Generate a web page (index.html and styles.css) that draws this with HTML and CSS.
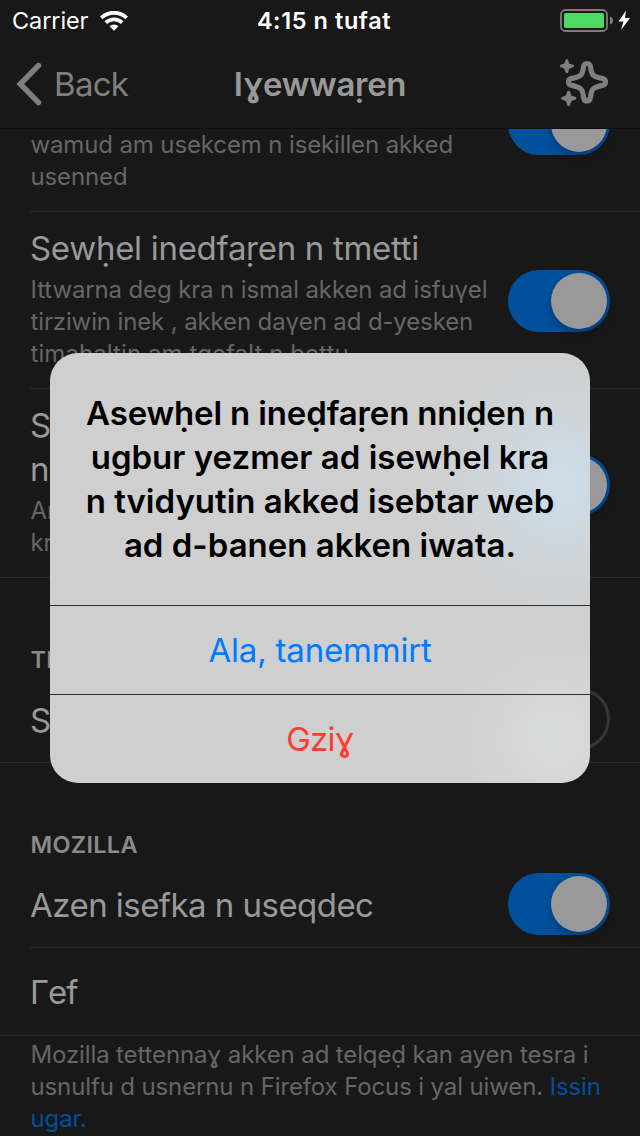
FILE: index.html
```html
<!DOCTYPE html>
<html lang="kab">
<head>
<meta charset="utf-8">
<title>Iɣewwaṛen</title>
<link rel="stylesheet" href="styles.css">
</head>
<body>
<div class="screen">
  <header class="top">
    <div class="status">
      <div class="carrier"><span class="carrier-name">Carrier</span>
        <svg class="wifi" width="28" height="20" viewBox="0 0 28 20"><g fill="none" stroke="#fff" stroke-width="3.8"><path d="M1.3 6.9A18.2 18.2 0 0 1 26.7 6.9"/><path d="M5.800 11.600A11.800 11.800 0 0 1 22.200 11.600"/></g><path fill="#fff" d="M9.6 15.200a6.400 6.400 0 0 1 8.800 0L14 19.800z"/></svg>
      </div>
      <div class="clock">4:15 n tufat</div>
      <div class="power">
        <svg width="72" height="24" viewBox="0 0 72 24"><rect x="1" y="1" width="46" height="21" rx="4.5" fill="none" stroke="#7c7c7c" stroke-width="1.8"/><rect x="4" y="4" width="40" height="15" rx="1.8" fill="#4cd964"/><path d="M50 7.500c4 1 4 7 0 8z" fill="#7c7c7c"/><path d="M66 1.500L58.500 12.500h5L61 21l9-12h-5z" fill="#fff"/></svg>
      </div>
    </div>
    <nav class="nav">
      <div class="back"><svg width="26" height="44" viewBox="0 0 26 44"><path d="M22.500 3.500L4.200 22 22.500 40.500" fill="none" stroke="#7f7f7f" stroke-width="5.4" stroke-linecap="round" stroke-linejoin="miter"/></svg><span class="back-label">Back</span></div>
      <h1 class="title">Iɣewwaṛen</h1>
      <div class="news"><svg width="50" height="50" viewBox="0 0 50 50"><path d="M27 5.500C30.500 5.500 30.500 8.500 31 12C32 17 33 18 38 19.500C42.500 20.500 45.500 20.500 45.500 24C45.500 27.500 42.500 27 38 28.500C33 30 32 31 31 36C30.500 39.500 30.500 43 27 43C23.500 43 23.500 39.500 23 36C22 31 21 30 16 28.500C11.500 27 8.500 27.500 8.500 24C8.500 20.500 11.500 20.500 16 19.500C21 18 22 17 23 12C23.500 8.500 23.500 5.500 27 5.500z" fill="none" stroke="#7f7f7f" stroke-width="5.2"/><g fill="#7f7f7f" stroke="#7f7f7f" stroke-width="1.600" stroke-linejoin="round"><path d="M6.300 2h1l1.400 4.200L13 7.600v1L8.700 10 7.300 14.200h-1L4.900 10 .9 8.600v-1L4.900 6.200z"/><path d="M8.100 33.500h1l1.700 4.700 4.700 1.600v1l-4.700 1.600-1.700 4.700h-1l-1.700-4.700L2 40.800v-1l4.400-1.600z"/></g></svg></div>
    </nav>
  </header>

  <main class="list">
    <section class="row row-first">
      <p class="sub"><span>wamud am usekcem n isekillen akked</span><span>usenned</span></p>
      <div class="switch on"><i class="knob"></i></div>
    </section>
    <section class="row row-social">
      <div class="copy"><h2 class="label">Sewḥel inedfaṛen n tmetti</h2>
      <p class="sub"><span>Ittwarna deg kra n ismal akken ad isfuүel</span><span>tirziwin inek , akken daүen ad d-yesken</span><span class="loose">timahaltin am tgefalt n bettu</span></p></div>
      <div class="switch on"><i class="knob"></i></div>
    </section>
    <section class="row row-other">
      <div class="copy"><h2 class="label"><span>Sewḥel ineḍfaṛen</span><span>nniḍen n ugbur</span></h2>
      <p class="sub"><span>Ar ad isewḥel</span><span>kra n tvidyutin</span></p></div>
      <div class="switch on"><i class="knob"></i></div>
    </section>
    <h3 class="group">TE</h3>
    <section class="row row-speed">
      <h2 class="label">Sewḥel</h2>
      <div class="switch"></div>
    </section>
    <h3 class="group">MOZILLA</h3>
    <section class="row row-usage">
      <h2 class="label tight">Azen isefka n useqdec</h2>
      <div class="switch on"><i class="knob"></i></div>
    </section>
    <section class="row row-about"><h2 class="label tighter">Γef</h2></section>
    <p class="sub note"><span>Mozilla tettennaɣ akken ad telqeḍ kan ayen tesra i</span><span>usnulfu d usnernu n Firefox Focus i yal uiwen. <a class="link">Issin</a></span><span><a class="link">ugar.</a></span></p>
  </main>

  <div class="alert">
    <p class="message"><span class="snug">Asewḥel n ineḍfaṛen nniḍen n</span><span>ugbur yezmer ad isewḥel kra</span><span>n tvidyutin akked isebtar web</span><span>ad d-banen akken iwata.</span></p>
    <div class="action"><span>Ala, tanemmirt</span></div>
    <div class="action danger"><span>Gziɣ</span></div>
  </div>
</div>
</body>
</html>
```
FILE: styles.css
```css
* { box-sizing: border-box; margin: 0; padding: 0; }
body { background: #181818; font-family: Inter, "Noto Sans", sans-serif; }
.screen { position: relative; width: 640px; height: 1136px; overflow: hidden; background: #181818; display: flex; flex-direction: column; }
.top { height: 129px; border-bottom: 1px solid #0d0d0d; flex: none; }
.status { height: 40px; display: grid; grid-template-columns: 1fr auto 1fr; align-items: center; color: #fff; line-height: 42px; }
.carrier { display: flex; align-items: center; padding-left: 12px; gap: 12px; }
.carrier-name { font-size: 23.5px; letter-spacing: -.1px; }
.clock { font-size: 23.5px; font-weight: 600; padding-left: 8px; letter-spacing: .58px; }
.power { display: flex; justify-content: flex-end; padding-right: 8px; }
.nav { height: 88px; display: grid; grid-template-columns: 1fr auto 1fr; align-items: center; }
.back { display: flex; align-items: center; padding-left: 16px; gap: 12px; color: #7f7f7f; }
.back-label { font-size: 33px; letter-spacing: -.7px; }
.title { font-size: 33px; font-weight: 600; color: #999; letter-spacing: -.3px; }
.news { display: flex; justify-content: flex-end; padding: 0 30px 2px 0; }
.list { flex: 1; overflow: hidden; }
.row { margin-left: 30px; padding-right: 30px; border-bottom: 1px solid #2b2b2b; display: flex; justify-content: space-between; }
.row-first { height: 83px; }
.row-first .switch { margin-top: -36px; }
.row-social { height: 177px; padding-top: 14px; }
.row-social .switch { margin-top: 44px; }
.row-other, .row-speed, .row-about { margin-left: 0; padding-left: 30px; }
.row-other { height: 189px; padding-top: 14px; }
.row-other .switch { margin-top: 51px; }
.row-speed { height: 87px; align-items: center; }
.row-usage { height: 87px; align-items: center; }
.row-about { height: 88px; align-items: center; }
.label { font-size: 33px; line-height: 44px; font-weight: 400; color: #999; white-space: nowrap; letter-spacing: -.3px; }
.row-speed .label, .row-usage .label { padding-top: 2px; }
.label.tight { letter-spacing: -.54px; }
.label.tighter { letter-spacing: -1px; }
.label span, .sub > span, .message span { display: block; white-space: nowrap; }
.sub { font-size: 24px; line-height: 32px; color: #666; letter-spacing: -.13px; padding-left: .5px; }
.copy .sub { margin-top: 4px; }
.sub .loose { letter-spacing: .08px; }
.link { color: #004f9e; }
.group { height: 98px; padding: 64px 0 0 30.5px; line-height: 36px; font-size: 23.5px; font-weight: 600; color: #8a8a8a; letter-spacing: .3px; }
.note { padding: 3px 0 0 30.5px; }
.switch { flex: none; width: 102px; height: 62px; border-radius: 31px; border: 3px solid #34363b; }
.switch.on { background: #00509d; border: 0; padding: 3px; display: flex; justify-content: flex-end; }
.knob { width: 56px; height: 56px; border-radius: 50%; background: #999; box-shadow: 0 4px 10px rgba(0,0,0,.25); }
.alert { position: absolute; left: 50px; top: 353px; width: 540px; height: 430px; border-radius: 28px; overflow: hidden; text-align: center; background: radial-gradient(circle at 510px 132px, #cddde8 0, rgba(205,221,232,0) 130px), radial-gradient(circle at 505px 385px, #dadbdb 0, rgba(218,219,219,0) 110px), #cfcfcf; }
.message { height: 252px; padding-top: 38px; font-size: 33px; line-height: 44px; font-weight: 600; color: #000; }
.message .snug { letter-spacing: -.15px; }
.action { height: 89px; border-top: 1px solid #2c2c2e; line-height: 88px; font-size: 33px; color: #007aff; letter-spacing: -.2px; }
.danger { color: #ff3b30; letter-spacing: -.8px; }
```
